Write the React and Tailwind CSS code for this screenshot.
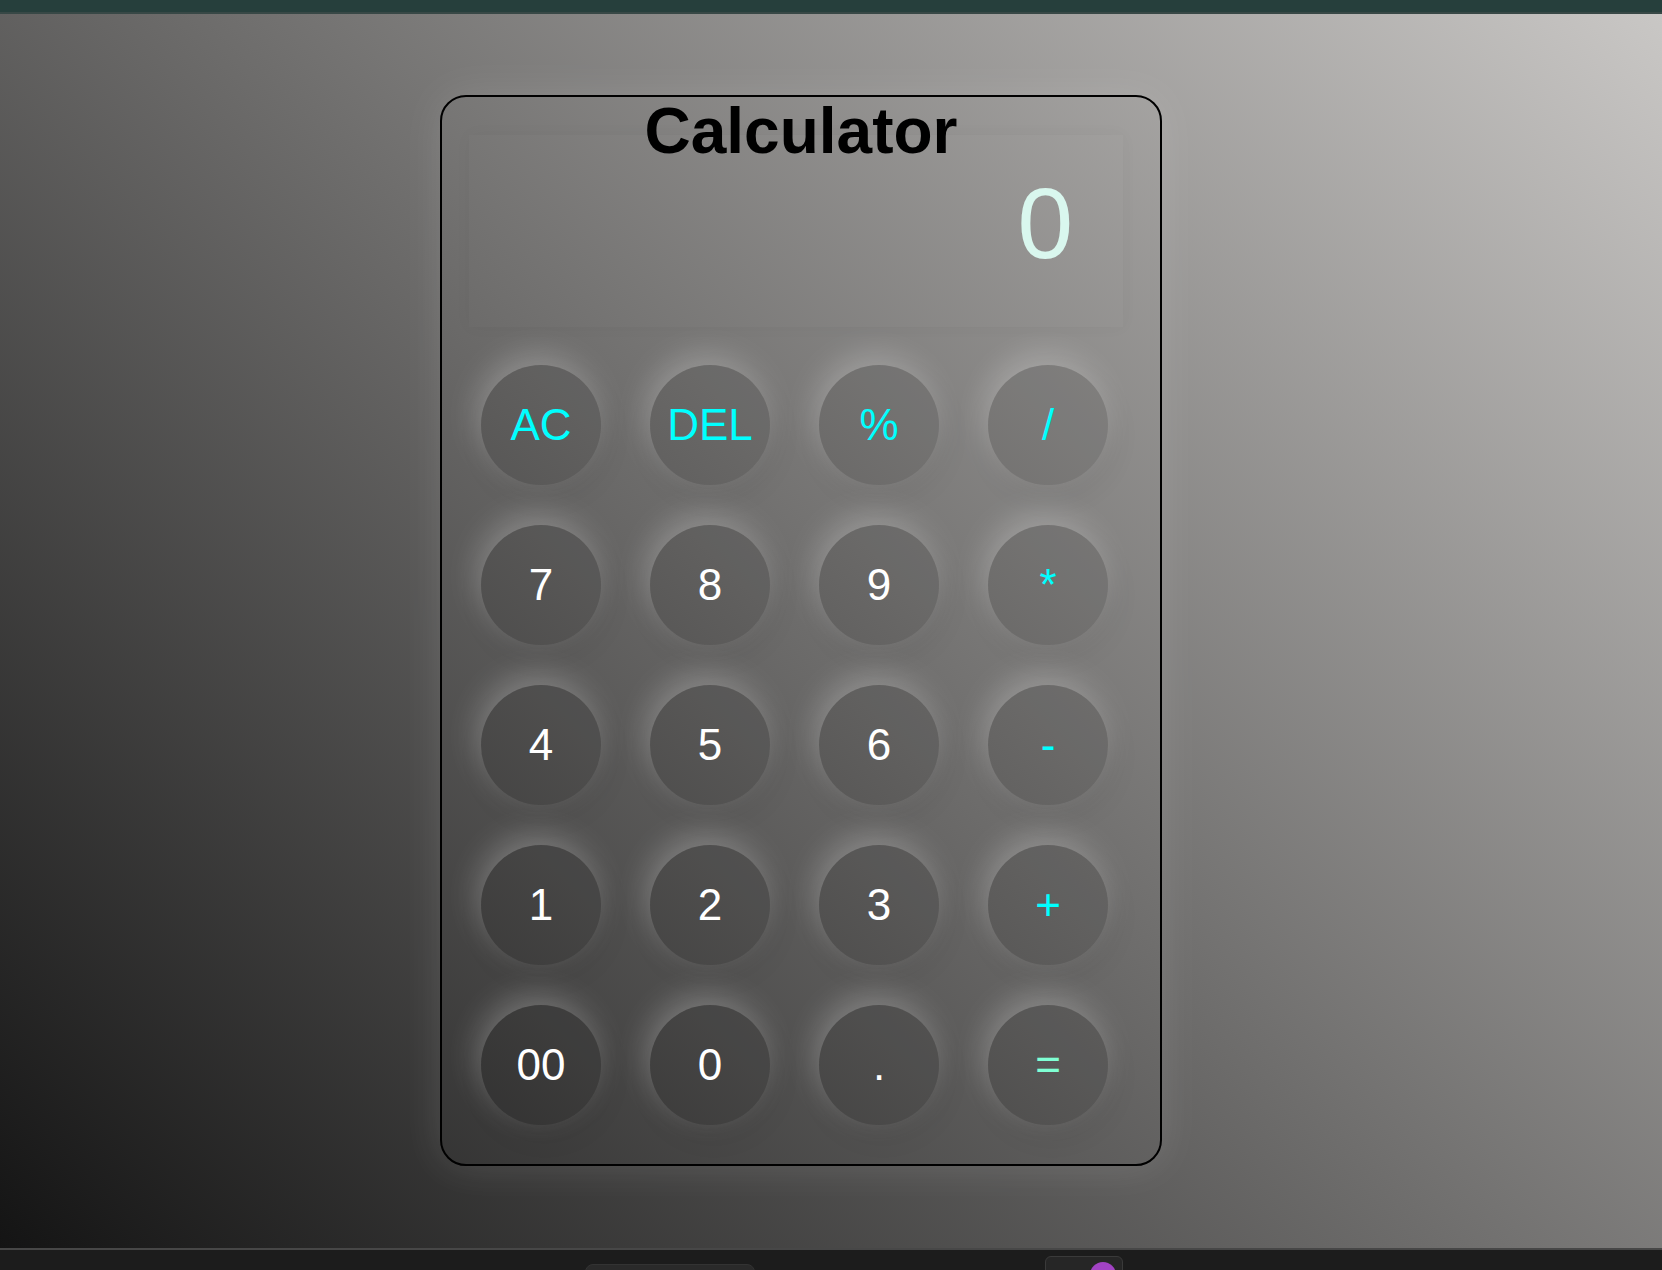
export default function App() {
  const keys = [
    { label: "AC", tone: "op" },
    { label: "DEL", tone: "op" },
    { label: "%", tone: "op" },
    { label: "/", tone: "op" },
    { label: "7" },
    { label: "8" },
    { label: "9" },
    { label: "*", tone: "op" },
    { label: "4" },
    { label: "5" },
    { label: "6" },
    { label: "-", tone: "op" },
    { label: "1" },
    { label: "2" },
    { label: "3" },
    { label: "+", tone: "op" },
    { label: "00" },
    { label: "0" },
    { label: "." },
    { label: "=", tone: "eq" },
  ];

  const toneClass = {
    op: "text-[#00ffff]",
    eq: "text-[#7fffd4]",
    num: "text-white",
  };

  return (
    <div className="h-[1270px] flex flex-col overflow-hidden font-['Liberation_Sans',Arial,sans-serif]">
      {/* window title strip */}
      <div className="h-[12px] bg-[#263f3c]"></div>
      <div className="h-[2px] bg-[#384846]"></div>

      <main className="flex-1 bg-[linear-gradient(45deg,#141414,#c9c7c5)] pl-[440px] pt-[81px]">
        <div className="w-[722px] h-[1071px] border-2 border-black rounded-[26px] flex flex-col shadow-[0_0_40px_rgba(255,255,255,0.12)]">
          <h1 className="relative z-10 -mt-[2px] text-center text-[64px] leading-[1.15] font-bold text-black">
            Calculator
          </h1>

          <div className="-mt-[34px] ml-[27px] w-[654px] h-[192px] pr-[50px] pt-[31px] text-right bg-white/[0.01] shadow-[0_0_16px_rgba(0,0,0,0.035)]">
            <span className="text-[100px] text-[#d9f7ee] leading-[115px]">0</span>
          </div>

          <div className="mt-[38px] ml-[39px] grid grid-cols-[repeat(4,120px)] gap-x-[49px] gap-y-[40px]">
            {keys.map((k) => (
              <button
                key={k.label}
                className={`w-[120px] h-[120px] rounded-full bg-black/10 flex items-center justify-center text-[44px] leading-none shadow-[-4px_-10px_30px_rgba(255,255,255,0.25),4px_10px_30px_rgba(0,0,0,0.08)] ${toneClass[k.tone || "num"]}`}
              >
                {k.label}
              </button>
            ))}
          </div>
        </div>
      </main>

      {/* taskbar */}
      <div className="h-[2px] bg-[#474747]"></div>
      <div className="h-[20px] bg-[#1c1c1c] relative">
        <div className="absolute left-[585px] top-[14px] w-[170px] h-[10px] rounded-t-lg bg-[#2a2a2a] border border-[#333]"></div>
        <div className="absolute left-[1045px] top-[6px] w-[78px] h-[20px] rounded-md bg-[#262626] border border-[#3a3a3a]">
          <div className="absolute left-[44px] top-[5px] w-[26px] h-[26px] rounded-full bg-[#a243c4]"></div>
        </div>
      </div>
    </div>
  );
}
